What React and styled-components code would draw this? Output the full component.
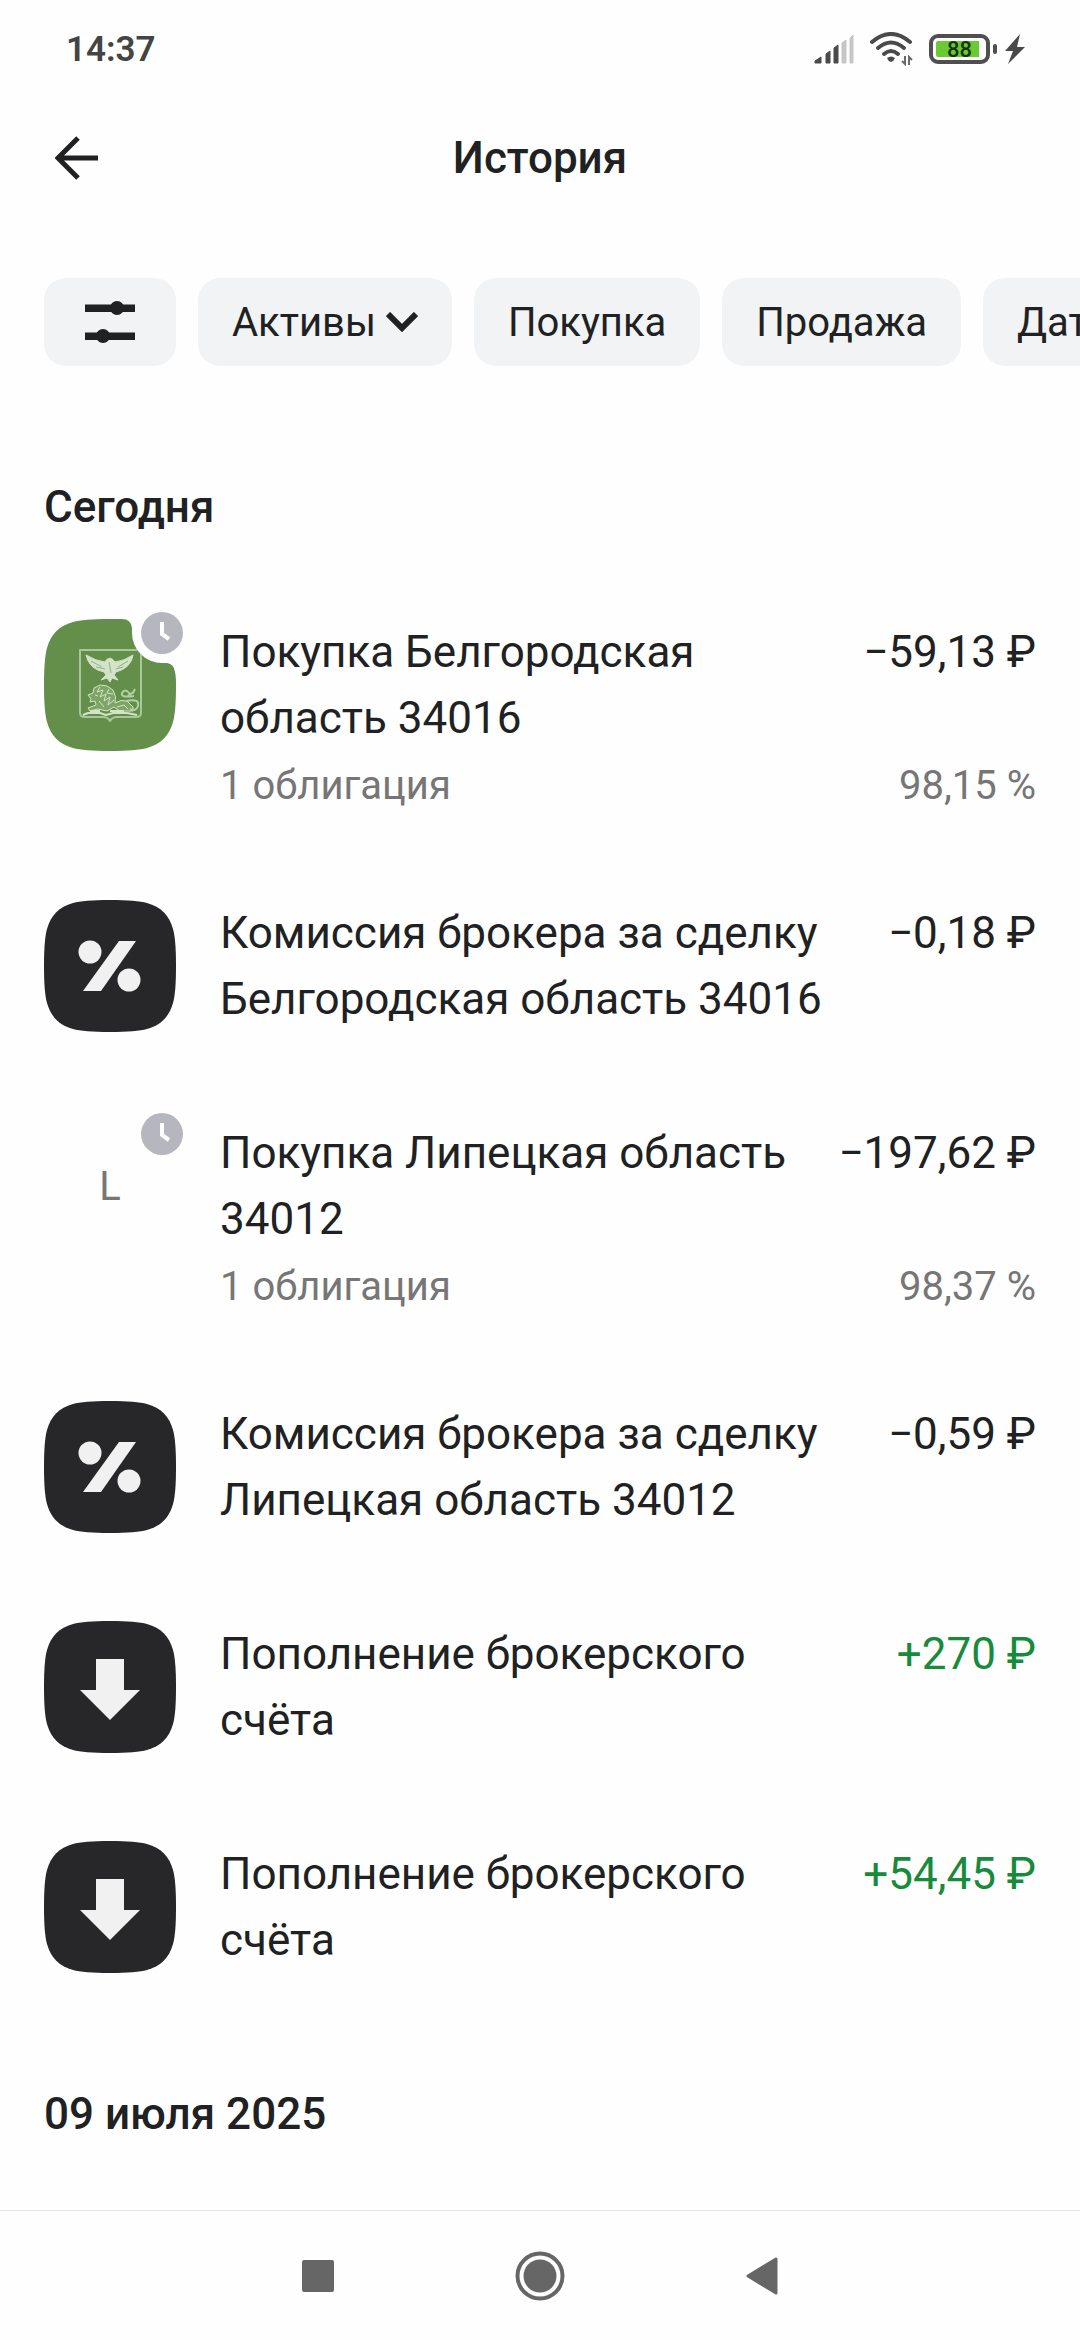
import React from 'react';
import styled, { createGlobalStyle } from 'styled-components';

const squircle =
	'M66 0C84 0 96 1 103 3C117 7 125 15 129 29C131 36 132 48 132 66C132 84 131 96 129 103C125 117 117 125 103 129C96 131 84 132 66 132C48 132 36 131 29 129C15 125 7 117 3 103C1 96 0 84 0 66C0 48 1 36 3 29C7 15 15 7 29 3C36 1 48 0 66 0Z';

// same shape with a bite in the corner for the badge
const squircleCut =
	'M66 0H78Q87 0 88 9V14A30 30 0 0 0 118 44H123Q130 45 131 53C132 58 132 62 132 66C132 84 131 96 129 103C125 117 117 125 103 129C96 131 84 132 66 132C48 132 36 131 29 129C15 125 7 117 3 103C1 96 0 84 0 66C0 48 1 36 3 29C7 15 15 7 29 3C36 1 48 0 66 0Z';

const operations = [
	{ icon: 'belgorod', pending: true, title: 'Покупка Белгородская область 34016', note: '1 облигация', amount: '−59,13 ₽', rate: '98,15 %' },
	{ icon: 'percent', title: 'Комиссия брокера за сделку Белгородская область 34016', amount: '−0,18 ₽' },
	{ icon: 'letter', pending: true, title: 'Покупка Липецкая область 34012', note: '1 облигация', amount: '−197,62 ₽', rate: '98,37 %' },
	{ icon: 'percent', title: 'Комиссия брокера за сделку Липецкая область 34012', amount: '−0,59 ₽' },
	{ icon: 'deposit', title: 'Пополнение брокерского счёта', amount: '+270 ₽', income: true },
	{ icon: 'deposit', title: 'Пополнение брокерского счёта', amount: '+54,45 ₽', income: true },
];

function StatusIcons() {
	return (
		<StatusGroup>
			<svg width="40" height="30" viewBox="0 0 40 30">
				<path d="M1 29V27L7 23V29Z M12 29V20L16 17V29Z M20 29V14L24 11V29Z" fill="#4a4a4a" stroke="#4a4a4a" strokeLinejoin="round" />
				<path d="M28 29V9L32 6V29Z M36 29V4L39 1V29Z" fill="#c6c6c6" stroke="#c6c6c6" strokeLinejoin="round" />
			</svg>
			<svg width="43" height="34" viewBox="0 0 43 34">
				<g fill="none" stroke="#4a4a4a" strokeWidth="4" strokeLinecap="round">
					<path d="M2 10Q21 -6 40 10" />
					<path d="M8 16Q21 5 34 16" />
					<path d="M14 22Q21 16 28 22" />
				</g>
				<path d="M17 26Q21 23 25 26Q24 29 21 30Q18 29 17 26Z" fill="#4a4a4a" />
				<path d="M35 24V32L32 29M39 33V25L42 28" fill="none" stroke="#6a6a6a" strokeWidth="2" />
			</svg>
			<Battery>
				<BatteryLevel>88</BatteryLevel>
			</Battery>
			<svg width="20" height="30" viewBox="0 0 20 30">
				<path d="M15 0L0 17H8L3 30L20 13H12Z" fill="#4a4a4a" />
			</svg>
		</StatusGroup>
	);
}

function Emblem() {
	return (
		<g fill="none" stroke="#d3e3c9" strokeWidth="1" strokeLinejoin="round">
			<path d="M36 31H97V94Q97 98 92 98H73Q68 98 66 102Q64 98 59 98H41Q36 98 36 94Z" stroke="#a9c799" strokeWidth="2" />
			<path d="M42 36Q52 42 61 43Q62 40 66 39Q69 40 71 43Q80 42 89 36Q87 49 72 53L70 56L74 61L68 59L66 63L63 59L57 61L62 56L60 53Q45 50 42 36Z" fill="#d3e3c9" />
			<path d="M47 42L58 48M52 48L61 50M84 42L74 48M79 48L72 50M65 43L67 54" stroke="#8fb27d" />
			<path d="M44 76L49 74L50 69L56 66L63 67L69 71Q73 78 71 84Q77 80 83 82L89 88V92H76L70 88L63 92L54 90L46 92L44 89L52 86L51 82L46 83L47 80Z" fill="#7da568" />
			<path d="M56 68L53 73L59 71L56 78L62 75L60 82L66 78L64 86L70 81M65 70L63 74L69 75M51 76L54 77M55 82L60 88M73 88L80 86L84 90" />
			<path d="M82 82Q96 79 94 87Q92 93 86 90M90 77Q76 79 78 74Q81 69 85 74Q88 77 91 70M84 77L88 74" strokeWidth="2" stroke="#b4cea6" />
			<path d="M39 96L44 94H56L62 96L69 94H83L93 96M46 92H56M66 92H80" strokeWidth="2" />
		</g>
	);
}

function Avatar({ icon, pending }) {
	return (
		<AvatarBox>
			{icon === 'letter' ? (
				<Letter>L</Letter>
			) : (
				<svg width="132" height="132" viewBox="0 0 132 132">
					<path d={pending ? squircleCut : squircle} fill={icon === 'belgorod' ? '#638f4b' : '#272729'} />
					{icon === 'belgorod' && (
						<>
							<clipPath id="cut">
								<path d={squircleCut} />
							</clipPath>
							<g clipPath="url(#cut)">
								<Emblem />
							</g>
						</>
					)}
					{icon === 'percent' && (
						<g fill="#f1f1f1">
							<circle cx="46" cy="52" r="11.500" />
							<circle cx="85" cy="80" r="11.500" />
							<path d="M75 41H92L57 91H39Z" />
						</g>
					)}
					{icon === 'deposit' && <path d="M52 38H80V69H96L66 99L36 69H52Z" fill="#f1f1f1" />}
				</svg>
			)}
			{pending && (
				<Badge>
					<svg width="42" height="42" viewBox="0 0 42 42">
						<circle cx="21" cy="21" r="21" fill="#b6b6bf" />
						<path d="M21 10V22L28 27" fill="none" stroke="#fff" strokeWidth="4" />
					</svg>
				</Badge>
			)}
		</AvatarBox>
	);
}

export default function App() {
	return (
		<Screen>
			<GlobalStyle />
			<StatusBar>
				<Clock>14:37</Clock>
				<StatusIcons />
			</StatusBar>

			<Header>
				<BackButton aria-label="Назад">
					<svg width="44" height="44" viewBox="0 0 44 44">
						<path d="M43 22H4M23 2L3 22L23 42" fill="none" stroke="#202122" strokeWidth="5" />
					</svg>
				</BackButton>
				<Title>История</Title>
			</Header>

			<Filters>
				<Chip aria-label="Фильтры" $icon>
					<svg width="50" height="44" viewBox="0 0 50 44">
						<path d="M0 4.500H50V12H0ZM0 32.500H50V40H0Z" fill="#202122" />
						<circle cx="32" cy="8" r="7" fill="#202122" />
						<circle cx="18" cy="36" r="7" fill="#202122" />
					</svg>
				</Chip>
				<Chip>
					Активы
					<svg width="32" height="20" viewBox="0 0 32 20">
						<path d="M2 2L16 16L30 2" fill="none" stroke="#202122" strokeWidth="6" />
					</svg>
				</Chip>
				<Chip>Покупка</Chip>
				<Chip>Продажа</Chip>
				<Chip>Дата</Chip>
			</Filters>

			<Feed>
				<DayTitle>Сегодня</DayTitle>
				<List>
					{operations.map((op, i) => (
						<Row key={i}>
							<Avatar icon={op.icon} pending={op.pending} />
							<Info>
								<Name>{op.title}</Name>
								{op.note && <Note>{op.note}</Note>}
							</Info>
							<Sum>
								<Amount $income={op.income}>{op.amount}</Amount>
								{op.rate && <Note>{op.rate}</Note>}
							</Sum>
						</Row>
					))}
				</List>
				<DayTitle $next>09 июля 2025</DayTitle>
			</Feed>

			<NavBar>
				<NavButton aria-label="Недавние">
					<svg width="32" height="32" viewBox="0 0 32 32">
						<rect width="32" height="32" rx="2" fill="#666" />
					</svg>
				</NavButton>
				<NavButton aria-label="Домой">
					<svg width="50" height="50" viewBox="0 0 50 50">
						<circle cx="25" cy="25" r="22.500" fill="none" stroke="#666" strokeWidth="4" />
						<circle cx="25" cy="25" r="16.500" fill="#666" />
					</svg>
				</NavButton>
				<NavButton aria-label="Назад">
					<svg width="32" height="38" viewBox="0 0 32 38">
						<path d="M2 19L30 2V36Z" fill="#666" stroke="#666" strokeWidth="3" strokeLinejoin="round" />
					</svg>
				</NavButton>
			</NavBar>
		</Screen>
	);
}

const GlobalStyle = createGlobalStyle`
	* {
		box-sizing: border-box;
	}

	body {
		margin: 0;
		background: #fefefe;
		color: #202122;
		font-family: Roboto, 'Noto Sans', sans-serif;
	}

	button {
		padding: 0;
		border: none;
		background: none;
		color: inherit;
		font: inherit;
		cursor: pointer;
	}

	svg {
		display: block;
		flex-shrink: 0;
	}
`;

const Screen = styled.div`
	display: flex;
	flex-direction: column;
	min-height: 100vh;
	overflow: hidden;
`;

const StatusBar = styled.div`
	display: flex;
	align-items: center;
	justify-content: space-between;
	height: 98px;
	padding: 0 55px 0 66px;
`;

const Clock = styled.div`
	color: #444;
	font-size: 35px;
	font-weight: 600;
`;

const StatusGroup = styled.div`
	display: flex;
	align-items: center;
	gap: 16px;
`;

const Battery = styled.div`
	position: relative;
	width: 61px;
	height: 30px;
	margin-right: -1px;
	padding: 3px;
	border: 4px solid #4f4f4f;
	border-radius: 9px;

	&::after {
		content: '';
		position: absolute;
		top: 6px;
		right: -11px;
		width: 4px;
		height: 10px;
		border-radius: 2px;
		background: #4f4f4f;
	}
`;

const BatteryLevel = styled.div`
	display: flex;
	align-items: center;
	justify-content: center;
	height: 16px;
	border-radius: 2px;
	background: linear-gradient(90deg, #6cc934 91%, #fefefe 91%);
	color: #16350a;
	font-size: 22px;
	font-weight: 500;
`;

const Header = styled.header`
	display: grid;
	grid-template-columns: 44px 1fr 44px;
	align-items: center;
	height: 120px;
	padding: 0 55px;
`;

const BackButton = styled.button`
	height: 44px;
`;

const Title = styled.h1`
	margin: 0;
	font-size: 44px;
	font-weight: 500;
	text-align: center;
`;

const Filters = styled.div`
	display: flex;
	gap: 22px;
	margin-top: 60px;
	padding-left: 44px;
	overflow: hidden;
`;

const Chip = styled.button`
	display: flex;
	flex-shrink: 0;
	align-items: center;
	justify-content: center;
	gap: 10px;
	height: 88px;
	padding: 0 ${(props) => (props.$icon ? 41 : 34)}px;
	border-radius: 22px;
	background: #f1f3f5;
	font-size: 40px;
`;

const Feed = styled.main`
	flex: 1;
	padding: 108px 44px 0;
`;

const DayTitle = styled.h2`
	margin: ${(props) => (props.$next ? '64px 0 0' : '0 0 35px')};
	font-size: 44px;
	font-weight: 500;
	line-height: 66px;
`;

const List = styled.ul`
	margin: 0;
	padding: 0;
	list-style: none;
`;

const Row = styled.li`
	display: flex;
	align-items: flex-start;
	gap: 44px;
	padding: 44px 0;
`;

const AvatarBox = styled.div`
	position: relative;
	display: flex;
	flex-shrink: 0;
	align-items: center;
	justify-content: center;
	width: 132px;
	height: 132px;
`;

const Letter = styled.span`
	color: #767676;
	font-size: 40px;
`;

const Badge = styled.span`
	position: absolute;
	top: -7px;
	right: -7px;
`;

const Info = styled.div`
	flex: 1;
	min-width: 0;
`;

const Name = styled.div`
	font-size: 44px;
	line-height: 66px;
`;

const Note = styled.div`
	padding-top: 8px;
	color: #767676;
	font-size: 40px;
	line-height: 53px;
`;

const Sum = styled.div`
	display: flex;
	flex-direction: column;
	align-items: flex-end;
	justify-content: space-between;
	align-self: stretch;
	white-space: nowrap;
`;

const Amount = styled.div`
	color: ${(props) => (props.$income ? '#178a3c' : '#202122')};
	font-size: 44px;
	line-height: 66px;
`;

const NavBar = styled.nav`
	display: flex;
	align-items: center;
	justify-content: center;
	gap: 122px;
	height: 130px;
	border-top: 1px solid #e4e4e4;
`;

const NavButton = styled.button`
	display: flex;
	align-items: center;
	justify-content: center;
	width: 100px;
	height: 100px;
`;
